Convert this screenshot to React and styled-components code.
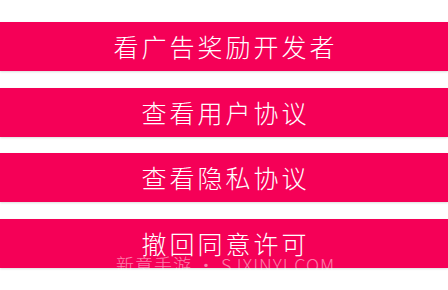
import React from "react";
import styled, { createGlobalStyle } from "styled-components";

const GlobalStyle = createGlobalStyle`
  html, body {
    margin: 0;
    padding: 0;
    background: #ffffff;
  }
  body {
    font-family: "Noto Sans CJK SC", "Noto Sans", sans-serif;
  }
`;

const Page = styled.div`
  position: relative;
  width: 448px;
  height: 290px;
  overflow: hidden;
  background: #ffffff;
  padding-top: 22px;
  box-sizing: border-box;
  display: flex;
  flex-direction: column;
  gap: 16.5px;
`;

const ActionButton = styled.button`
  display: flex;
  align-items: center;
  justify-content: center;
  width: 100%;
  height: 49px;
  margin: 0;
  padding: 0 0 0 3px;
  border: none;
  border-radius: 0;
  background: #f50057;
  color: #ffffff;
  font-family: "Noto Sans CJK SC", "Noto Sans", sans-serif;
  font-size: 25px;
  font-weight: 300;
  letter-spacing: 3px;
  line-height: 1;
  box-shadow: 0 1px 2px rgba(0, 0, 0, 0.14);
  cursor: pointer;
`;

const Watermark = styled.div`
  position: absolute;
  left: 116px;
  top: 255px;
  color: rgba(255, 255, 255, 0.5);
  font-family: "Noto Sans CJK SC", "Noto Sans", sans-serif;
  font-size: 18px;
  font-weight: 300;
  line-height: 18px;
  letter-spacing: 1px;
  white-space: nowrap;
  pointer-events: none;
`;

const actions = ["看广告奖励开发者", "查看用户协议", "查看隐私协议", "撤回同意许可"];

export default function App() {
  return (
    <>
      <GlobalStyle />
      <Page>
        {actions.map((label) => (
          <ActionButton key={label} type="button">
            {label}
          </ActionButton>
        ))}
        <Watermark>新意手游 • SJXINYI.COM</Watermark>
      </Page>
    </>
  );
}
